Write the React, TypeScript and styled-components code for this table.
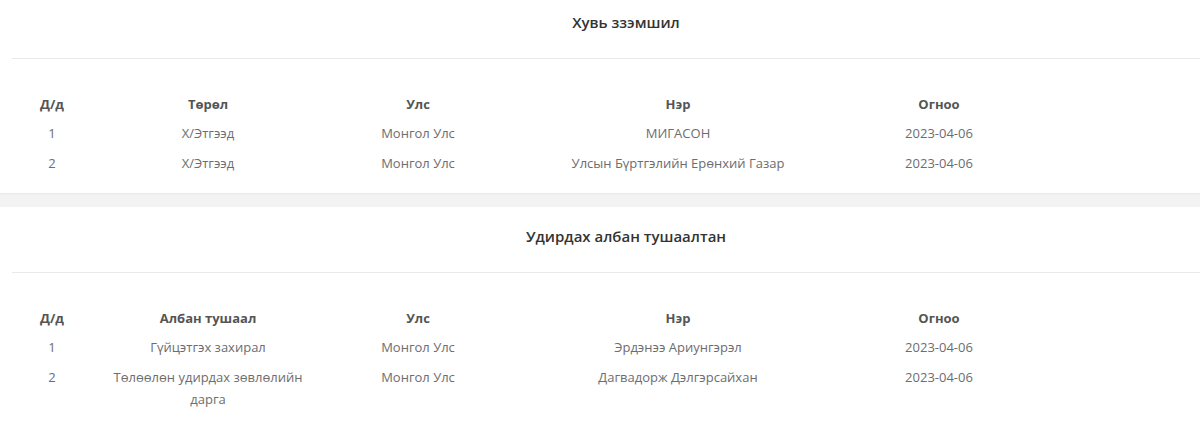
import React from "react";
import styled, { createGlobalStyle } from "styled-components";

const GlobalStyle = createGlobalStyle`
  html, body {
    margin: 0;
    padding: 0;
    background: #f3f3f3;
    overflow: hidden;
  }
  body {
    font-family: "Open Sans", "Noto Sans", sans-serif;
    color: #666;
  }
`;

const Page = styled.div`
  width: 1252px;
  margin-top: -7px;
  display: flex;
  flex-direction: column;
  gap: 14px;
`;

const Card = styled.section`
  background: #fff;
  box-shadow: 0 1px 2px rgba(0, 0, 0, 0.05);
  padding-bottom: 15px;
`;

const CardTitle = styled.h2`
  margin: 0 12px;
  padding: 18px 0 25px;
  font-size: 15px;
  line-height: 22px;
  font-weight: 600;
  color: #333;
  text-align: center;
  border-bottom: 1px solid #e9e9e9;
`;

const Table = styled.table`
  margin: 29px 0 0 12px;
  border-collapse: collapse;
  table-layout: fixed;
`;

const HeadCell = styled.th<{ $w: number }>`
  width: ${(p) => p.$w}px;
  padding: 5px 12px 3px;
  font-size: 13px;
  line-height: 22px;
  font-weight: 700;
  color: #555;
  text-align: center;
  box-sizing: border-box;
`;

const Cell = styled.td`
  padding: 4px 12px;
  font-size: 13px;
  line-height: 22px;
  color: #6d6d6d;
  text-align: center;
  vertical-align: top;
`;

const widths = [80, 232, 188, 332, 190];

type Section = {
  title: string;
  headers: string[];
  rows: string[][];
};

const sections: Section[] = [
  {
    title: "Хувь ззэмшил",
    headers: ["Д/д", "Төрөл", "Улс", "Нэр", "Огноо"],
    rows: [
      ["1", "Х/Этгээд", "Монгол Улс", "МИГАСОН", "2023-04-06"],
      ["2", "Х/Этгээд", "Монгол Улс", "Улсын Бүртгэлийн Ерөнхий Газар", "2023-04-06"],
    ],
  },
  {
    title: "Удирдах албан тушаалтан",
    headers: ["Д/д", "Албан тушаал", "Улс", "Нэр", "Огноо"],
    rows: [
      ["1", "Гүйцэтгэх захирал", "Монгол Улс", "Эрдэнээ Ариунгэрэл", "2023-04-06"],
      ["2", "Төлөөлөн удирдах зөвлөлийн дарга", "Монгол Улс", "Дагвадорж Дэлгэрсайхан", "2023-04-06"],
    ],
  },
];

export default function App() {
  return (
    <>
      <GlobalStyle />
      <Page>
        {sections.map((s) => (
          <Card key={s.title}>
            <CardTitle>{s.title}</CardTitle>
            <Table>
              <thead>
                <tr>
                  {s.headers.map((h, i) => (
                    <HeadCell key={h} $w={widths[i]}>
                      {h}
                    </HeadCell>
                  ))}
                </tr>
              </thead>
              <tbody>
                {s.rows.map((r) => (
                  <tr key={r[0]}>
                    {r.map((c, i) => (
                      <Cell key={i}>{c}</Cell>
                    ))}
                  </tr>
                ))}
              </tbody>
            </Table>
          </Card>
        ))}
      </Page>
    </>
  );
}
